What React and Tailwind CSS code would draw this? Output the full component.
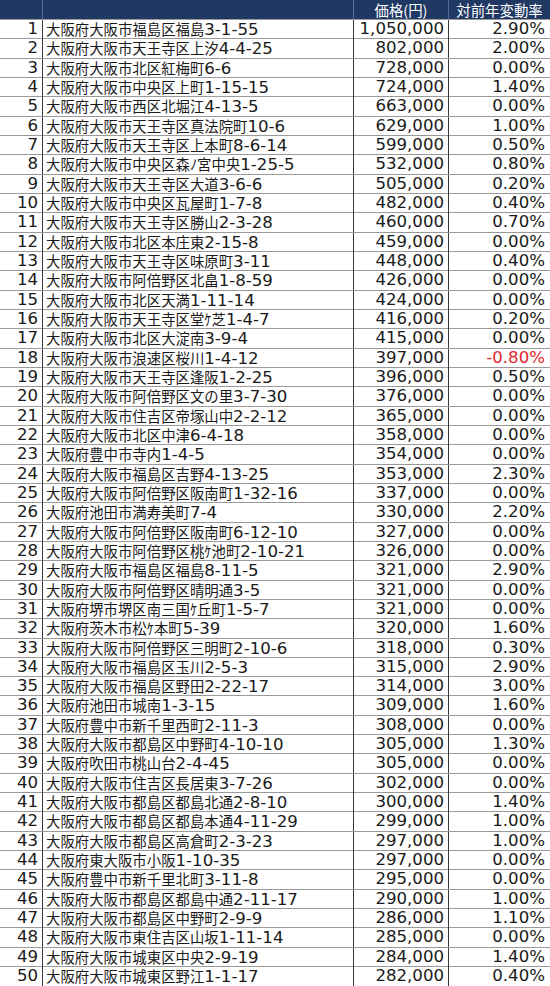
const rows = [
	['大阪府大阪市福島区福島3-1-55', '1,050,000', '2.90%'],
	['大阪府大阪市天王寺区上汐4-4-25', '802,000', '2.00%'],
	['大阪府大阪市北区紅梅町6-6', '728,000', '0.00%'],
	['大阪府大阪市中央区上町1-15-15', '724,000', '1.40%'],
	['大阪府大阪市西区北堀江4-13-5', '663,000', '0.00%'],
	['大阪府大阪市天王寺区真法院町10-6', '629,000', '1.00%'],
	['大阪府大阪市天王寺区上本町8-6-14', '599,000', '0.50%'],
	['大阪府大阪市中央区森ﾉ宮中央1-25-5', '532,000', '0.80%'],
	['大阪府大阪市天王寺区大道3-6-6', '505,000', '0.20%'],
	['大阪府大阪市中央区瓦屋町1-7-8', '482,000', '0.40%'],
	['大阪府大阪市天王寺区勝山2-3-28', '460,000', '0.70%'],
	['大阪府大阪市北区本庄東2-15-8', '459,000', '0.00%'],
	['大阪府大阪市天王寺区味原町3-11', '448,000', '0.40%'],
	['大阪府大阪市阿倍野区北畠1-8-59', '426,000', '0.00%'],
	['大阪府大阪市北区天満1-11-14', '424,000', '0.00%'],
	['大阪府大阪市天王寺区堂ｹ芝1-4-7', '416,000', '0.20%'],
	['大阪府大阪市北区大淀南3-9-4', '415,000', '0.00%'],
	['大阪府大阪市浪速区桜川1-4-12', '397,000', '-0.80%'],
	['大阪府大阪市天王寺区逢阪1-2-25', '396,000', '0.50%'],
	['大阪府大阪市阿倍野区文の里3-7-30', '376,000', '0.00%'],
	['大阪府大阪市住吉区帝塚山中2-2-12', '365,000', '0.00%'],
	['大阪府大阪市北区中津6-4-18', '358,000', '0.00%'],
	['大阪府豊中市寺内1-4-5', '354,000', '0.00%'],
	['大阪府大阪市福島区吉野4-13-25', '353,000', '2.30%'],
	['大阪府大阪市阿倍野区阪南町1-32-16', '337,000', '0.00%'],
	['大阪府池田市満寿美町7-4', '330,000', '2.20%'],
	['大阪府大阪市阿倍野区阪南町6-12-10', '327,000', '0.00%'],
	['大阪府大阪市阿倍野区桃ｹ池町2-10-21', '326,000', '0.00%'],
	['大阪府大阪市福島区福島8-11-5', '321,000', '2.90%'],
	['大阪府大阪市阿倍野区晴明通3-5', '321,000', '0.00%'],
	['大阪府堺市堺区南三国ｹ丘町1-5-7', '321,000', '0.00%'],
	['大阪府茨木市松ｹ本町5-39', '320,000', '1.60%'],
	['大阪府大阪市阿倍野区三明町2-10-6', '318,000', '0.30%'],
	['大阪府大阪市福島区玉川2-5-3', '315,000', '2.90%'],
	['大阪府大阪市福島区野田2-22-17', '314,000', '3.00%'],
	['大阪府池田市城南1-3-15', '309,000', '1.60%'],
	['大阪府豊中市新千里西町2-11-3', '308,000', '0.00%'],
	['大阪府大阪市都島区中野町4-10-10', '305,000', '1.30%'],
	['大阪府吹田市桃山台2-4-45', '305,000', '0.00%'],
	['大阪府大阪市住吉区長居東3-7-26', '302,000', '0.00%'],
	['大阪府大阪市都島区都島北通2-8-10', '300,000', '1.40%'],
	['大阪府大阪市都島区都島本通4-11-29', '299,000', '1.00%'],
	['大阪府大阪市都島区高倉町2-3-23', '297,000', '1.00%'],
	['大阪府東大阪市小阪1-10-35', '297,000', '0.00%'],
	['大阪府豊中市新千里北町3-11-8', '295,000', '0.00%'],
	['大阪府大阪市都島区都島中通2-11-17', '290,000', '1.00%'],
	['大阪府大阪市都島区中野町2-9-9', '286,000', '1.10%'],
	['大阪府大阪市東住吉区山坂1-11-14', '285,000', '0.00%'],
	['大阪府大阪市城東区中央2-9-19', '284,000', '1.40%'],
	['大阪府大阪市城東区野江1-1-17', '282,000', '0.40%'],
];

const cjk = "font-['Noto_Sans_CJK_JP',sans-serif] text-[14.4px]";
const num = "font-['DejaVu_Sans','Noto_Sans_CJK_JP',sans-serif] text-[16.6px]";

// split the address into the kanji part and the street number
const Address = ({ text }) => {
	const m = text.match(/^(.*?)(\d.*)$/);
	return (
		<span className="whitespace-nowrap">
			<span className={cjk}>{m[1]}</span>
			<span className={num}>{m[2]}</span>
		</span>
	);
};

const App = () => {
	return (
		<div className="w-[550px] h-[986px] overflow-hidden bg-white text-[#1a1a1a]">
			{/* Header */}
			<div className="grid grid-cols-[43px_311px_95px_101px] h-[19px] bg-[#203864] text-white leading-[19px]">
				<div className="border-r border-[#5a6d92]" />
				<div className="border-r border-[#5a6d92]" />
				<div className={`border-r border-[#5a6d92] text-center ${cjk}`}>価格(円)</div>
				<div className={`text-center ${cjk}`}>対前年変動率</div>
			</div>

			{/* Rows */}
			{rows.map(([addr, price, rate], i) => (
				<div
					key={i}
					className="grid grid-cols-[43px_311px_95px_101px] h-[19.34px] border-t border-[#9a9a9a] leading-[18px]"
				>
					<div className={`border-r border-[#3a3a3a] text-right pr-[4px] ${num}`}>{i + 1}</div>
					<div className="border-r border-[#3a3a3a] pl-[3px]">
						<Address text={addr} />
					</div>
					<div className={`border-r border-[#3a3a3a] text-right pr-[4px] ${num}`}>{price}</div>
					<div
						className={`text-right pr-[5px] ${num} ${
							rate.startsWith('-') ? 'text-[#e0282e]' : ''
						}`}
					>
						{rate}
					</div>
				</div>
			))}
		</div>
	);
};

export default App;
